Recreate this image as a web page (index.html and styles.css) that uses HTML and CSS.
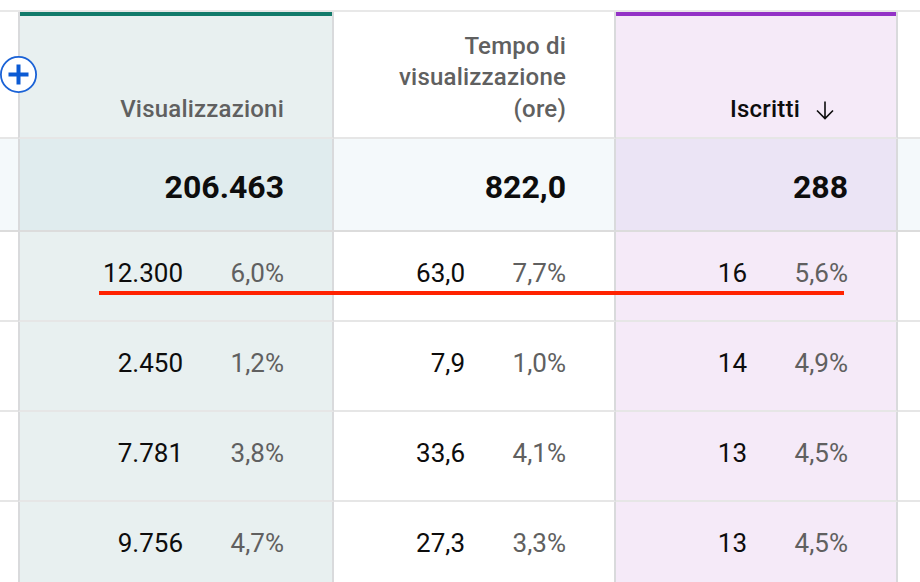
FILE: index.html
```html
<!DOCTYPE html>
<html lang="it">
<head>
<meta charset="utf-8">
<title>Tabella metriche</title>
<link rel="stylesheet" href="styles.css">
</head>
<body>
<div class="sheet">
  <div class="grid">
    <div class="cell stub head"></div>
    <div class="cell col views head"><span class="label">Visualizzazioni</span></div>
    <div class="cell col watch head"><span class="label wrap">Tempo di visualizzazione (ore)</span></div>
    <div class="cell col subs head"><span class="label active">Iscritti</span><svg class="sort" viewBox="0 0 24 24" width="24" height="24"><path d="M12 3.5V20.5M4 12.5L12 20.5L20 12.5" fill="none" stroke="#0d0d0d" stroke-width="1.6"/></svg></div>
    <div class="cell stub head"></div>

    <div class="cell stub total"></div>
    <div class="cell col views total"><span class="sum">206.463</span></div>
    <div class="cell col watch total"><span class="sum">822,0</span></div>
    <div class="cell col subs total"><span class="sum">288</span></div>
    <div class="cell stub total"></div>

    <div class="cell stub row"></div>
    <div class="cell col views row"><span class="val">12.300</span><span class="pct">6,0%</span></div>
    <div class="cell col watch row"><span class="val">63,0</span><span class="pct">7,7%</span></div>
    <div class="cell col subs row"><span class="val">16</span><span class="pct">5,6%</span></div>
    <div class="cell stub row"></div>

    <div class="cell stub row"></div>
    <div class="cell col views row"><span class="val">2.450</span><span class="pct">1,2%</span></div>
    <div class="cell col watch row"><span class="val">7,9</span><span class="pct">1,0%</span></div>
    <div class="cell col subs row"><span class="val">14</span><span class="pct">4,9%</span></div>
    <div class="cell stub row"></div>

    <div class="cell stub row"></div>
    <div class="cell col views row"><span class="val">7.781</span><span class="pct">3,8%</span></div>
    <div class="cell col watch row"><span class="val">33,6</span><span class="pct">4,1%</span></div>
    <div class="cell col subs row"><span class="val">13</span><span class="pct">4,5%</span></div>
    <div class="cell stub row"></div>

    <div class="cell stub row"></div>
    <div class="cell col views row"><span class="val">9.756</span><span class="pct">4,7%</span></div>
    <div class="cell col watch row"><span class="val">27,3</span><span class="pct">3,3%</span></div>
    <div class="cell col subs row"><span class="val">13</span><span class="pct">4,5%</span></div>
    <div class="cell stub row"></div>
  </div>

  <svg class="add-btn" viewBox="0 0 38 38" width="38" height="38">
    <circle cx="18.5" cy="19.5" r="17.6" fill="#fff" stroke="#1a62d6" stroke-width="1.8"/>
    <rect x="8.5" y="17.5" width="20" height="4" fill="#0b5ad4"/>
    <rect x="16.5" y="9.5" width="4" height="20" fill="#0b5ad4"/>
  </svg>
  <div class="annotation"></div>
</div>
</body>
</html>
```

FILE: styles.css
```css
html, body {
  margin: 0;
  padding: 0;
  background: #ffffff;
  overflow: hidden;
}

body {
  font-family: Roboto, "Liberation Sans", sans-serif;
  color: #0d0d0d;
}

.sheet {
  position: relative;
  padding-top: 10px;
}

.grid {
  display: grid;
  grid-template-columns: 18px 316px 282px 282px 1fr;
  grid-template-rows: 127px 93px repeat(4, 90px);
  border-top: 2px solid #e8e8e8;
}

.cell {
  box-sizing: border-box;
  display: flex;
  justify-content: flex-end;
  background: #ffffff;
}

.col {
  border-right: 2px solid #d9dadc;
  padding-right: 48px;
}

.views {
  border-left: 2px solid #d9dadc;
}

/* header */
.head {
  border-bottom: 2px solid #e6e6e6;
  align-items: flex-end;
  padding-bottom: 12px;
}

.head.views {
  background: #e8f0f0;
  box-shadow: inset 0 4px 0 #127b6b;
}

.head.subs {
  background: #f5eaf8;
  box-shadow: inset 0 4px 0 #9332c6;
}

.label {
  font-size: 24px;
  font-weight: 500;
  line-height: 31.5px;
  color: #606060;
  text-align: right;
  letter-spacing: 0.2px;
}

.label.wrap {
  max-width: 200px;
}

.label.active {
  color: #0d0d0d;
}

.sort {
  flex: none;
  margin-left: 13px;
  margin-right: 11px;
  margin-bottom: 3px;
}

/* total row */
.total {
  background: #f4f9fb;
  border-bottom: 2px solid #dcdcdc;
  align-items: center;
  padding-top: 5px;
}

.total.views {
  background: #e0ecee;
}

.total.subs {
  background: #ebe4f5;
}

.sum {
  font-size: 32px;
  font-weight: 700;
  color: #0d0d0d;
}

/* data rows */
.row {
  border-bottom: 2px solid #e6e6e6;
  align-items: center;
  padding-bottom: 6px;
}

.row.views {
  background: #e8f0f0;
}

.row.subs {
  background: #f5eaf8;
}

.val {
  font-size: 26px;
  color: #0d0d0d;
}

.pct {
  font-size: 26px;
  color: #606060;
  min-width: 101px;
  text-align: right;
}

/* overlays */
.add-btn {
  position: absolute;
  left: 0;
  top: 55px;
}

.annotation {
  position: absolute;
  left: 99px;
  top: 291px;
  width: 745px;
  height: 4px;
  background: #ff2200;
}
```
